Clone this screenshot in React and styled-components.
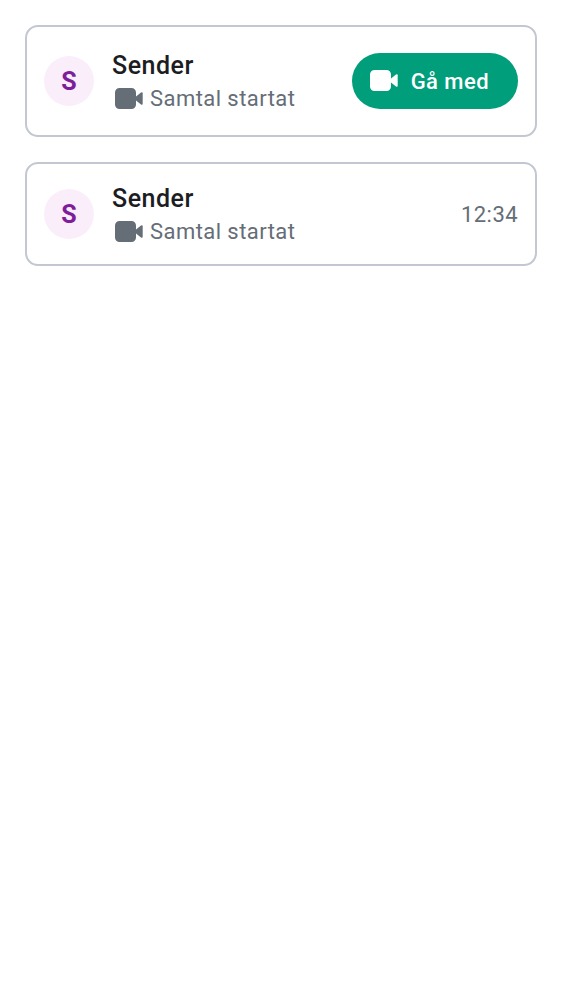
import React from 'react';
import styled, { createGlobalStyle } from 'styled-components';

const GlobalStyle = createGlobalStyle`
  *, *::before, *::after { box-sizing: border-box; }
  body { margin: 0; background: #ffffff; font-family: Roboto, "Noto Sans", sans-serif; }
`;

const Timeline = styled.main`
  display: flex;
  flex-direction: column;
  gap: 25px;
  padding: 25px;
`;

const Card = styled.article`
  display: flex;
  align-items: center;
  gap: 18px;
  padding: ${({ $roomy }) => ($roomy ? '21px' : '17px')} 17px;
  border: 2px solid #c3c7d1;
  border-radius: 13px;
`;

const Avatar = styled.span`
  display: flex;
  flex: none;
  align-items: center;
  justify-content: center;
  width: 50px;
  height: 50px;
  border-radius: 50%;
  background: #faeefb;
  color: #7e1e9a;
  font-size: 25px;
  font-weight: 700;
`;

const Details = styled.div`
  flex: 1;
  min-width: 0;
`;

const Name = styled.h2`
  margin: 0;
  color: #1b1d22;
  font-size: 25px;
  font-weight: 500;
  line-height: 36px;
  letter-spacing: 0.02em;
`;

const Status = styled.p`
  display: flex;
  align-items: center;
  gap: 7px;
  margin: 0;
  padding-left: 3px;
  color: #656d77;
  font-size: 22px;
  line-height: 30px;
  letter-spacing: 0.02em;
`;

const JoinButton = styled.button`
  display: flex;
  flex: none;
  align-items: center;
  gap: 13px;
  height: 56px;
  padding: 0 29px 0 18px;
  border: 0;
  border-radius: 28px;
  background: #009e7a;
  color: #ffffff;
  font-family: inherit;
  font-size: 22px;
  font-weight: 500;
  letter-spacing: 0.02em;
  cursor: pointer;
`;

const Time = styled.time`
  color: #656d77;
  font-size: 22px;
  letter-spacing: 0.02em;
`;

const Glyph = styled.svg`
  display: block;
  flex: none;
  width: 28px;
  height: 22px;
  fill: currentColor;
`;

const VideoIcon = () => (
  <Glyph viewBox="0 0 28 22" aria-hidden="true">
    <path d="M4.5 0H16.5A4.5 4.5 0 0 1 21 4.5V16.5A4.5 4.5 0 0 1 16.5 21H4.5A4.5 4.5 0 0 1 0 16.5V4.5A4.5 4.5 0 0 1 4.5 0Z" />
    <path d="M21 8.5L26 4.5Q27.7 3.5 27.7 5.5V15.5Q27.7 17.5 26 16.5L21 12.5Z" />
  </Glyph>
);

const CallEvent = ({ sender, roomy, children }) => (
  <Card $roomy={roomy}>
    <Avatar aria-hidden="true">{sender[0]}</Avatar>
    <Details>
      <Name>{sender}</Name>
      <Status><VideoIcon />Samtal startat</Status>
    </Details>
    {children}
  </Card>
);

export default function App() {
  return (
    <>
      <GlobalStyle />
      <Timeline lang="sv">
        <CallEvent sender="Sender" roomy>
          <JoinButton type="button"><VideoIcon />Gå med</JoinButton>
        </CallEvent>
        <CallEvent sender="Sender">
          <Time>12:34</Time>
        </CallEvent>
      </Timeline>
    </>
  );
}
